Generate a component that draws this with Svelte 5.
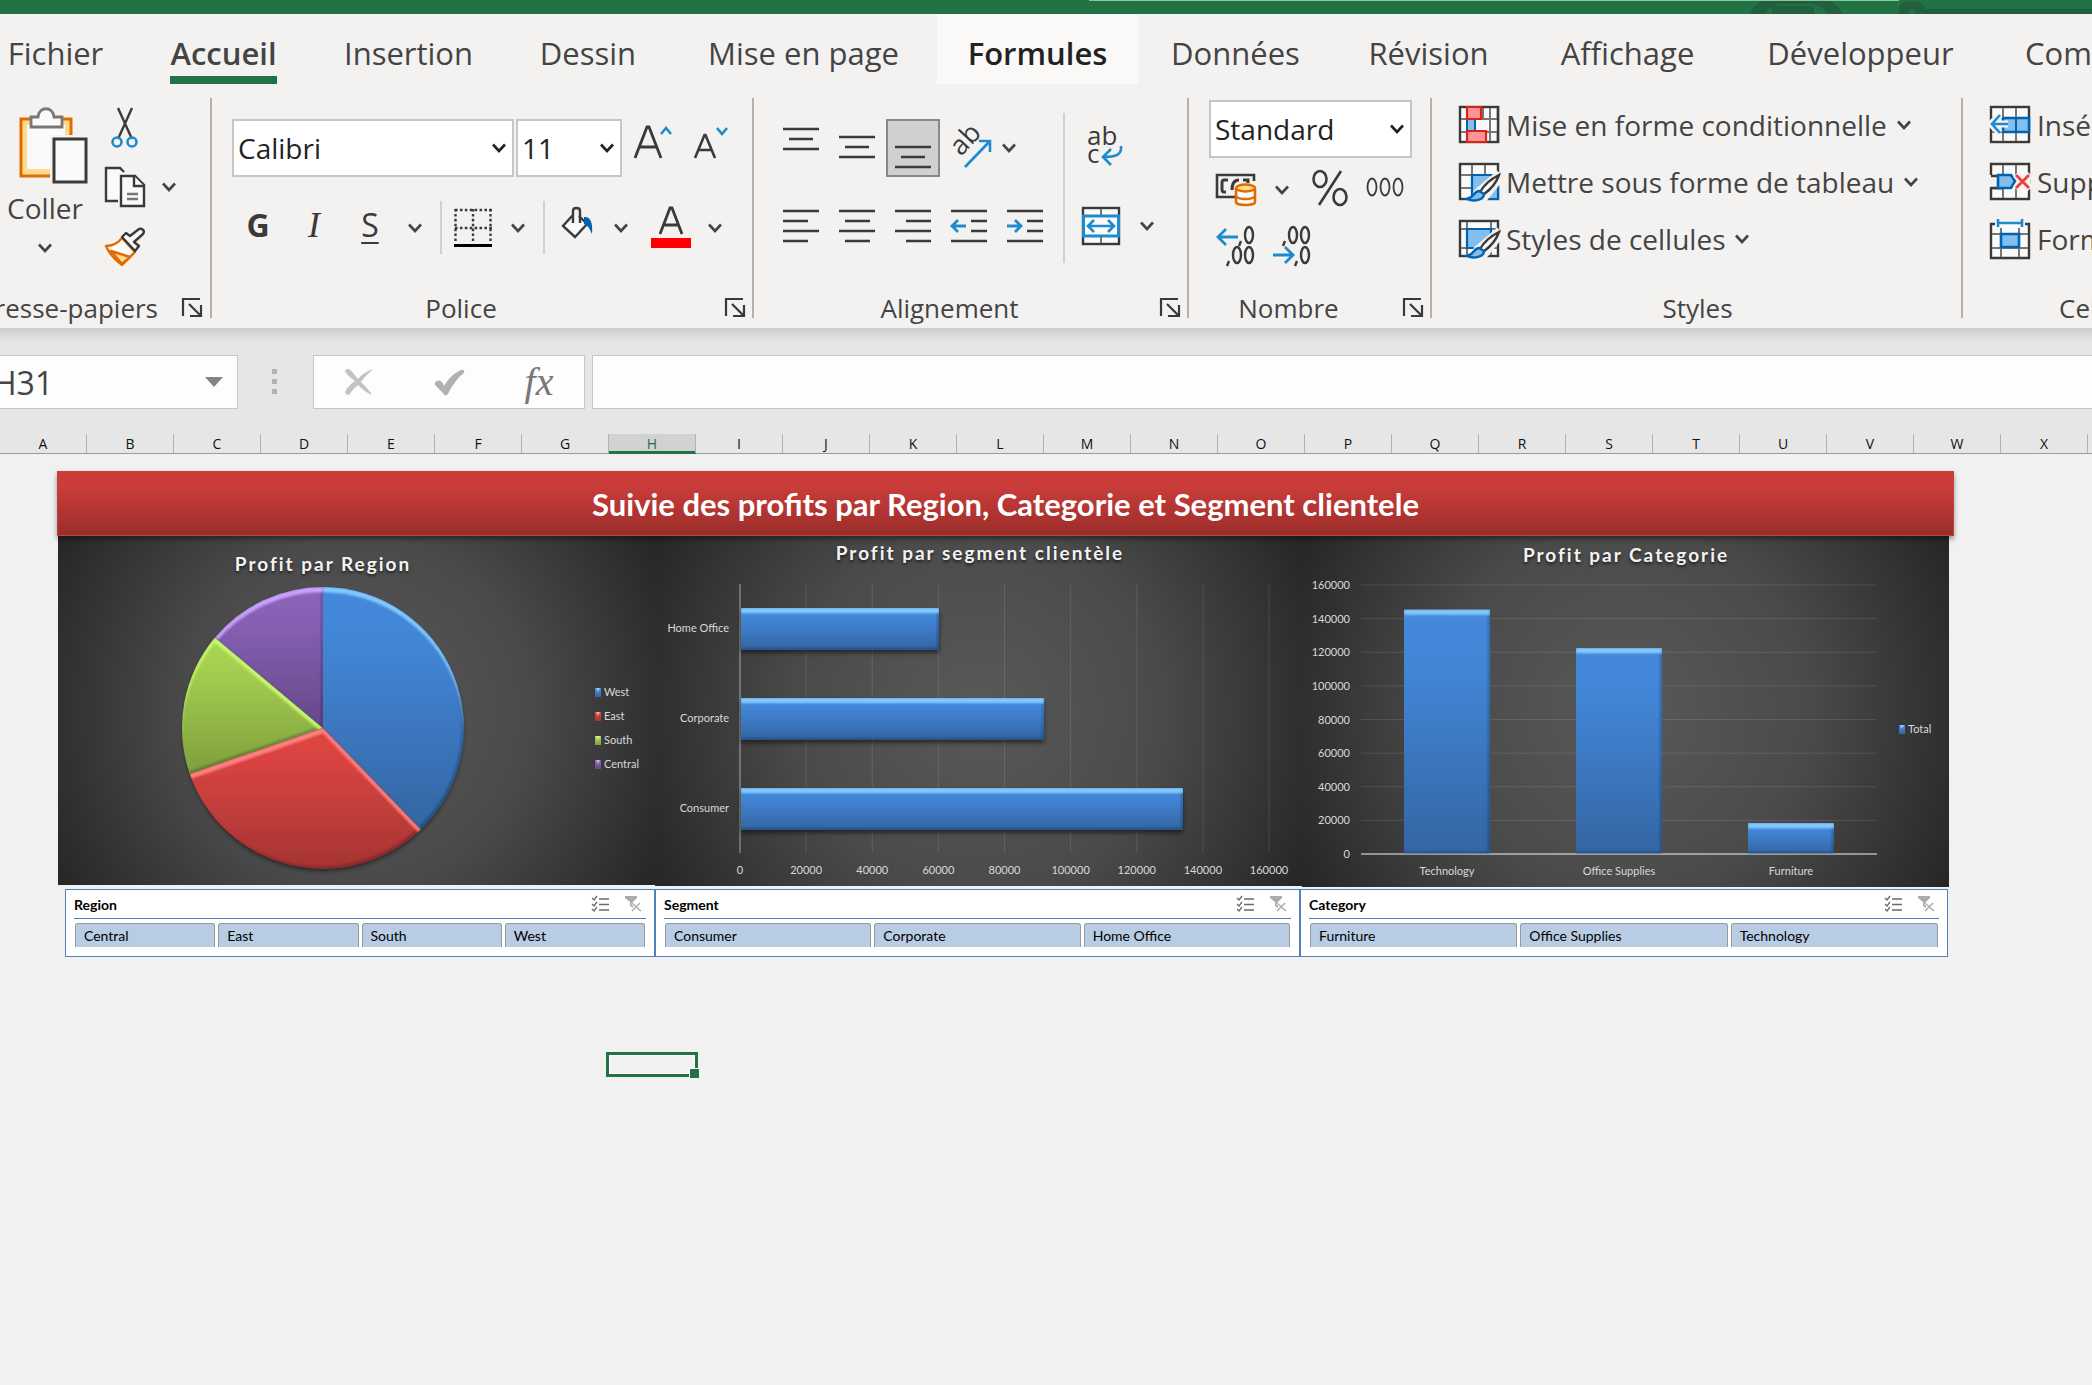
<script>
  const tabs = ['Fichier', 'Accueil', 'Insertion', 'Dessin', 'Mise en page', 'Formules', 'Données', 'Révision', 'Affichage', 'Développeur', 'Compléments'];
  const columns = 'ABCDEFGHIJKLMNOPQRSTUVWXY'.split('');

  const verticalAligns = [
    { name: 'Aligner en haut', top: 9 },
    { name: 'Aligner au centre', top: 17 },
    { name: 'Aligner en bas', top: 27, on: true }
  ];
  const horizontalAligns = [
    { name: 'Aligner à gauche', x: 2 },
    { name: 'Centrer', x: 8 },
    { name: 'Aligner à droite', x: 13 }
  ];

  const ink = '#3b3a39';

  const cx = 265;
  const cy = 192;
  const r = 141;
  const slices = [
    { name: 'South', from: 251, to: 310, fill: 'green' },
    { name: 'Central', from: 310, to: 360, fill: 'purple' },
    { name: 'West', from: 0, to: 136, fill: 'blue' },
    { name: 'East', from: 136, to: 251, fill: 'red' }
  ];
  const regions = [
    { name: 'West', fill: 'blue' },
    { name: 'East', fill: 'red' },
    { name: 'South', fill: 'green' },
    { name: 'Central', fill: 'purple' }
  ];
  const hues = [
    { id: 'blue', light: '#86ccff', top: '#4489dc', mid: '#4285d6', end: '#3465a2' },
    { id: 'red', light: '#ff8482', top: '#df4543', mid: '#d84340', end: '#a43432' },
    { id: 'green', light: '#c8fa70', top: '#acd853', mid: '#a4cd50', end: '#7e9f3d' },
    { id: 'purple', light: '#cfa4ff', top: '#8d66bc', mid: '#8660b4', end: '#664888' }
  ];
  const point = (deg) => {
    const a = (deg * Math.PI) / 180;
    return `${(cx + r * Math.sin(a)).toFixed(1)} ${(cy - r * Math.cos(a)).toFixed(1)}`;
  };
  const wedge = (s) => `M${cx} ${cy}L${point(s.from)}A${r} ${r} 0 ${s.to - s.from > 180 ? 1 : 0} 1 ${point(s.to)}Z`;

  const ticks = [0, 20000, 40000, 60000, 80000, 100000, 120000, 140000, 160000];
  const segments = [
    { name: 'Home Office', value: 60200 },
    { name: 'Corporate', value: 92000 },
    { name: 'Consumer', value: 134000 }
  ];
  const categories = [
    { name: 'Technology', value: 145400 },
    { name: 'Office Supplies', value: 122500 },
    { name: 'Furniture', value: 18400 }
  ];
  const sx = (v) => 85 + (v / 160000) * 529;
  const cyv = (v) => 318 - (v / 160000) * 269;

  const slicers = [
    { title: 'Region', items: ['Central', 'East', 'South', 'West'] },
    { title: 'Segment', items: ['Consumer', 'Corporate', 'Home Office'] },
    { title: 'Category', items: ['Furniture', 'Office Supplies', 'Technology'] }
  ];
</script>

{#snippet chevron()}
  <svg class="chev" width="14" height="10" viewBox="0 0 14 10" aria-hidden="true"><path d="M1 1.5L7 8L13 1.5" fill="none" stroke="currentColor" stroke-width="2.6" /></svg>
{/snippet}

{#snippet more(label)}
  <button aria-label={label}>{@render chevron()}</button>
{/snippet}

{#snippet launcher(label)}
  <button class="launcher" aria-label={label}>
    <svg width="21" height="20" viewBox="0 0 21 20" fill="none" stroke={ink} stroke-width="2.2"><path d="M1 18V1H18M7 6L18 17M19 7V18H8" /></svg>
  </button>
{/snippet}

{#snippet brush()}
  <path d="M38 12L42 17L26 37L14 39L17 30Z" fill="#fafafa" stroke="#f3f2f1" stroke-width="5" />
  <path d="M40 13C32 17 25 23 21 30L24 33C31 28 37 22 40 13Z" fill="#fafafa" stroke={ink} stroke-width="2.4" />
  <path d="M20 29C15 29 15 36 8 37C15 40 25 38 25 32Z" fill="#83beec" stroke="#0063b1" stroke-width="2.4" />
{/snippet}

{#snippet bevelDefs()}
  <defs>
    {#each hues as h}
      <filter id="bevel-{h.id}" x="-10%" y="-10%" width="120%" height="125%">
        <feOffset in="SourceAlpha" dy="5" result="down" />
        <feComposite in="SourceAlpha" in2="down" operator="out" />
        <feGaussianBlur stdDeviation="1.3" result="topSoft" />
        <feFlood flood-color={h.light} flood-opacity="0.95" />
        <feComposite in2="topSoft" operator="in" />
        <feComposite in2="SourceAlpha" operator="in" result="light" />
        <feOffset in="SourceAlpha" dx="-2" dy="-2" result="up" />
        <feComposite in="SourceAlpha" in2="up" operator="out" />
        <feGaussianBlur stdDeviation="1.2" result="lowSoft" />
        <feFlood flood-color="#10142c" flood-opacity="0.55" />
        <feComposite in2="lowSoft" operator="in" />
        <feComposite in2="SourceAlpha" operator="in" result="dark" />
        <feMerge>
          <feMergeNode in="SourceGraphic" />
          <feMergeNode in="dark" />
          <feMergeNode in="light" />
        </feMerge>
      </filter>
      <linearGradient id={h.id} x2="0" y2="1"><stop stop-color={h.top} /><stop offset="0.25" stop-color={h.mid} /><stop offset="1" stop-color={h.end} /></linearGradient>
    {/each}
  </defs>
{/snippet}

{#snippet swatch(x, y, fill)}
  <rect {x} y={y - 4} width="6" height="9" fill="url(#{fill})" />
  <path d="M{x + 1} {y - 4}h4l-2 4z" fill="#fff" fill-opacity="0.5" />
{/snippet}

<div class="app">
  <header class="titlebar">
    <svg width="1003" height="14" viewBox="0 0 1003 14" aria-hidden="true">
      <path d="M661 14C665 6 670 2 675 0H739C746 3 750 8 754 14H739C735 9 730 5 724 4H690C684 6 679 9 676 14Z" fill="#225f3d" />
      <path d="M683 6H725V14H683ZM810 14V8C810 0 835 -2 836 9H1003V14H827C827 6 820 8 820 14Z" fill="#225f3d" />
      <path d="M0 0H810V1H0Z" fill="#8fc3a5" />
    </svg>
  </header>

  <nav class="tabs" aria-label="Onglets du ruban">
    {#each tabs as tab}
      <button class="tab" class:active={tab === 'Accueil'} class:hover={tab === 'Formules'}><span>{tab}</span></button>
    {/each}
  </nav>

  <div class="ribbon">
    <section class="group">
      <div class="body clipboard">
        <button class="paste">
          <svg width="70" height="78" viewBox="0 0 70 78" aria-hidden="true">
            <rect x="4" y="13" width="50" height="57" fill="#fbdb8f" stroke="#e06c00" stroke-width="3" />
            <path d="M10 19H48V63H10Z" fill="#fafafa" />
            <path d="M14 21V11H21C22 0 36 0 37 11H45V21Z" fill="#fafafa" stroke="#797775" stroke-width="2.8" />
            <path d="M33 29H58V73H33Z" fill="#f3f2f1" />
            <rect x="37" y="33" width="32" height="43" fill="#fafafa" stroke={ink} stroke-width="3" />
          </svg>
          <span>Coller</span>
          {@render chevron()}
        </button>
        <div class="clip-tools">
          <button aria-label="Couper">
            <svg width="42" height="42" viewBox="0 0 42 42" fill="none">
              <path d="M14 2L28 33M28 2L14 33" stroke={ink} stroke-width="2.4" />
              <circle cx="13" cy="36" r="4.5" stroke="#1e8bcd" stroke-width="2.6" /><circle cx="28" cy="36" r="4.5" stroke="#1e8bcd" stroke-width="2.6" />
            </svg>
          </button>
          <div class="copy">
            <button aria-label="Copier">
              <svg width="42" height="42" viewBox="0 0 42 42" fill="#fafafa" stroke={ink} stroke-width="2.4">
                <path d="M14 35H2V2H16L20 6" /><path d="M17 10H31L40 19V40H17Z" /><path d="M30 10V20H40" /><path d="M23 28H34M23 33H34" stroke="#797775" />
              </svg>
            </button>
            {@render more('Options de copie')}
          </div>
          <button aria-label="Reproduire la mise en forme">
            <svg width="42" height="42" viewBox="0 0 42 42" stroke-width="2.4" stroke-linejoin="round">
              <path d="M18 12C14 17 8 20 2 20C5 27 11 34 18 39L31 26Z" fill="#fafafa" stroke="#e06c00" />
              <path d="M7 25L26 31L18 38Z" fill="#fbdb8f" stroke="#e06c00" />
              <path d="M18 11L22 7L26 10L35 3C39 2 41 5 39 8L30 16L35 20L31 25Z" fill="#fafafa" stroke={ink} />
            </svg>
          </button>
        </div>
      </div>
      <footer class="end"><span>Presse-papiers</span>{@render launcher('Presse-papiers')}</footer>
    </section>

    <section class="group">
      <div class="body font">
        <div class="font-row">
          <span class="pick"><select aria-label="Police"><option>Calibri</option></select>{@render chevron()}</span>
          <span class="pick"><select aria-label="Taille de police"><option>11</option></select>{@render chevron()}</span>
          <button class="grow" aria-label="Augmenter la taille de police">
            <svg width="40" height="44" viewBox="0 0 40 44" fill="none"><path d="M2 39L14 8H16L28 39M6 28H24" stroke={ink} stroke-width="2.8" /><path d="M28 15L33 9L38 15" stroke="#1e8bcd" stroke-width="2.6" /></svg>
          </button>
          <button class="shrink" aria-label="Réduire la taille de police">
            <svg width="40" height="44" viewBox="0 0 40 44" fill="none"><path d="M2 39L11.500 16H12.500L22 39M6 31H18" stroke={ink} stroke-width="2.6" /><path d="M24 9L29 15L34 9" stroke="#1e8bcd" stroke-width="2.6" /></svg>
          </button>
        </div>
        <div class="style-row">
          <button class="glyph bold">G</button>
          <button class="glyph italic">I</button>
          <button class="glyph under">S</button>
          {@render more('Options de soulignement')}
          <i class="rule"></i>
          <button aria-label="Bordures">
            <svg width="38" height="40" viewBox="0 0 38 40" fill="none"><path d="M1 2H38M1 20H38" stroke={ink} stroke-width="2.4" stroke-dasharray="2.600 2.300" /><path d="M1.500 1V35M19 1V35M36.500 1V35" stroke={ink} stroke-width="2.4" stroke-dasharray="2.600 2.300" /><path d="M0 37.500H38" stroke="#000" stroke-width="3" /></svg>
          </button>
          {@render more('Options de bordure')}
          <i class="rule"></i>
          <button aria-label="Couleur de remplissage">
            <svg width="34" height="44" viewBox="0 0 34 44"><path d="M12 9L2 20L14 31L26 18L18 10" fill="#fafafa" stroke={ink} stroke-width="2.4" /><path d="M12 17V5C12 1 19 1 19 5V17" fill="none" stroke={ink} stroke-width="2.4" /><path d="M23 11C30 10 32 18 31 28C29 24 28 20 23 18Z" fill="#0063b1" /></svg>
          </button>
          {@render more('Choisir le remplissage')}
          <button aria-label="Couleur de police">
            <svg width="40" height="42" viewBox="0 0 40 42"><path d="M9 27L19 1H21L31 27M13 18H27" fill="none" stroke={ink} stroke-width="2.8" /><rect y="31" width="40" height="10" fill="#f00" /></svg>
          </button>
          {@render more('Choisir la couleur')}
        </div>
      </div>
      <footer><span>Police</span>{@render launcher('Police')}</footer>
    </section>

    <section class="group">
      <div class="body align">
        <div class="align-main">
          <div class="align-row">
            {#each verticalAligns as a}
              <button class:on={a.on} aria-label={a.name}>
                <svg width="40" height="56" viewBox="0 0 40 56" stroke={ink} stroke-width="2.6"><path d="M2 {a.top}H38M8 {a.top + 10}H32M2 {a.top + 20}H38" /></svg>
              </button>
            {/each}
            <button aria-label="Orientation">
              <svg width="44" height="50" viewBox="0 0 44 50"><text x="14" y="34" transform="rotate(-47 14 34)" font-size="27" fill={ink}>ab</text><path d="M18 44L43 18M32 18H43V29" fill="none" stroke="#1e8bcd" stroke-width="2.6" /></svg>
            </button>
            {@render more('Options d’orientation')}
          </div>
          <div class="align-row">
            {#each horizontalAligns as a}
              <button aria-label={a.name}>
                <svg width="40" height="36" viewBox="0 0 40 36" stroke={ink} stroke-width="2.6"><path d="M2 3H38M{a.x} 13h25M2 23H38M{a.x} 33h25" /></svg>
              </button>
            {/each}
            <button aria-label="Diminuer le retrait">
              <svg width="40" height="36" viewBox="0 0 40 36" fill="none" stroke={ink} stroke-width="2.6"><path d="M2 3H38M22 13H38M22 23H38M2 33H38" /><path d="M17 18H3M9 12L3 18L9 24" stroke="#1e8bcd" stroke-width="2.8" /></svg>
            </button>
            <button aria-label="Augmenter le retrait">
              <svg width="40" height="36" viewBox="0 0 40 36" fill="none" stroke={ink} stroke-width="2.6"><path d="M2 3H38M22 13H38M22 23H38M2 33H38" /><path d="M2 18H16M10 12L16 18L10 24" stroke="#1e8bcd" stroke-width="2.8" /></svg>
            </button>
          </div>
        </div>
        <i class="rule tall"></i>
        <div class="wrap-tools">
          <button aria-label="Renvoyer à la ligne">
            <svg width="38" height="44" viewBox="0 0 38 44"><text font-size="26" fill={ink}><tspan x="1" y="21">ab</tspan><tspan x="1" y="39">c</tspan></text><path d="M35 22C36 31 30 33 17 33M25 25L17 33L25 41" fill="none" stroke="#1e8bcd" stroke-width="2.6" /></svg>
          </button>
          <div class="merge">
            <button aria-label="Fusionner et centrer">
              <svg width="38" height="38" viewBox="0 0 38 38"><rect x="1" y="1" width="36" height="36" fill="#fafafa" stroke={ink} stroke-width="2.4" /><path d="M19 2V36" stroke="#797775" stroke-width="2" /><rect x="1.500" y="9" width="35" height="20" fill="#fafafa" stroke="#1e8bcd" stroke-width="3" /><path d="M6 19H32M12 13L6 19L12 25M26 13L32 19L26 25" fill="none" stroke="#1e8bcd" stroke-width="2.6" /></svg>
            </button>
            {@render more('Options de fusion')}
          </div>
        </div>
      </div>
      <footer><span>Alignement</span>{@render launcher('Alignement')}</footer>
    </section>

    <section class="group">
      <div class="body number">
        <span class="pick"><select aria-label="Format de nombre"><option>Standard</option></select>{@render chevron()}</span>
        <div class="number-row">
          <button aria-label="Format comptable">
            <svg width="42" height="36" viewBox="0 0 42 36" fill="none"><path d="M39 9V3H2V25H20" stroke={ink} stroke-width="2.6" /><path d="M13 8H9Q7 8 7 11V17Q7 20 9 20H11M24 8Q17 8 17 18M28 8H33V11" stroke={ink} stroke-width="3" /><path d="M21 16V30C21 34 40 34 40 30V16" fill="#fafafa" stroke="#e06c00" stroke-width="2.6" /><ellipse cx="30.500" cy="16" rx="9.500" ry="3.500" fill="#fbdb8f" stroke="#e06c00" stroke-width="2.4" /><path d="M21 24C23 28 38 28 40 24" fill="none" stroke="#e06c00" stroke-width="2.4" /></svg>
          </button>
          {@render more('Choisir la devise')}
          <button aria-label="Style de pourcentage">
            <svg width="38" height="40" viewBox="0 0 38 40" fill="none" stroke={ink} stroke-width="2.6"><path d="M30 1L8 35" /><ellipse cx="9" cy="9" rx="6.500" ry="8" /><ellipse cx="29" cy="27" rx="6.500" ry="8" /></svg>
          </button>
          <button aria-label="Séparateur de milliers">
            <svg width="40" height="28" viewBox="0 0 40 28" fill="none" stroke={ink} stroke-width="1.800"><ellipse cx="7" cy="11" rx="4.500" ry="8.500" /><ellipse cx="20" cy="11" rx="4.500" ry="8.500" /><ellipse cx="33" cy="11" rx="4.500" ry="8.500" /></svg>
          </button>
        </div>
        <div class="decimal-row">
          <button aria-label="Ajouter une décimale">
            <svg width="40" height="42" viewBox="0 0 40 42" fill="none" stroke={ink} stroke-width="2.4"><ellipse cx="33" cy="10" rx="4" ry="8" /><ellipse cx="21" cy="30" rx="4" ry="8" /><ellipse cx="33" cy="30" rx="4" ry="8" /><path d="M25 16L23 21M13 36L11 41" /><path d="M22 12H2M10 4L2 12L10 20" stroke="#1e8bcd" stroke-width="2.8" /></svg>
          </button>
          <button aria-label="Réduire les décimales">
            <svg width="40" height="42" viewBox="0 0 40 42" fill="none" stroke={ink} stroke-width="2.4"><ellipse cx="21" cy="10" rx="4" ry="8" /><ellipse cx="33" cy="10" rx="4" ry="8" /><ellipse cx="33" cy="30" rx="4" ry="8" /><path d="M13 16L11 21M25 36L23 41" /><path d="M1 30H21M13 22L21 30L13 38" stroke="#1e8bcd" stroke-width="2.8" /></svg>
          </button>
        </div>
      </div>
      <footer><span>Nombre</span>{@render launcher('Nombre')}</footer>
    </section>

    <section class="group">
      <div class="body list">
        <button class="entry">
          <svg width="42" height="40" viewBox="0 0 42 40" fill="none"><rect x="1" y="2" width="38" height="35" fill="#fafafa" stroke={ink} stroke-width="2.4" /><path d="M2 14H38M2 27H38M8 3V36M24 3V36" stroke="#797775" stroke-width="2" /><path d="M8 15H38V26H8Z" fill="#fafafa" /><path d="M31 3V36" stroke="#797775" stroke-width="2" /><path d="M8 14H16V27H8Z" fill="#83beec" stroke="#0063b1" stroke-width="2" /><path d="M8 2H22V14H8ZM8 26H27V37H8Z" fill="#ff9296" stroke="#d92518" stroke-width="2.2" /><path d="M39 1V38" stroke={ink} stroke-width="2.4" /></svg>
          <span>Mise en forme conditionnelle</span>{@render chevron()}
        </button>
        <button class="entry">
          <svg width="42" height="40" viewBox="0 0 42 40" fill="none"><rect x="1" y="2" width="38" height="35" fill="#fafafa" stroke={ink} stroke-width="2.4" /><path d="M2 13H38M2 26H38M13 3V36M26 3V36" stroke="#797775" stroke-width="2" /><path d="M13 13H39V37H13Z" fill="#83beec" stroke="#0063b1" stroke-width="2.2" />{@render brush()}</svg>
          <span>Mettre sous forme de tableau</span>{@render chevron()}
        </button>
        <button class="entry">
          <svg width="42" height="40" viewBox="0 0 42 40" fill="none"><rect x="1" y="2" width="38" height="35" fill="#fafafa" stroke={ink} stroke-width="2.4" /><path d="M2 10H38M2 29H38M8 3V36M32 3V36" stroke="#797775" stroke-width="2" /><path d="M8 10H32V29H8Z" fill="#83beec" stroke="#0063b1" stroke-width="2.2" />{@render brush()}</svg>
          <span>Styles de cellules</span>{@render chevron()}
        </button>
      </div>
      <footer class="plain"><span>Styles</span></footer>
    </section>

    <section class="group">
      <div class="body list">
        <button class="entry">
          <svg width="42" height="40" viewBox="0 0 42 40" fill="none"><rect x="1" y="2" width="38" height="35" fill="#fafafa" stroke={ink} stroke-width="2.4" /><path d="M2 13H38M2 27H38M13 3V36M26 3V36" stroke="#797775" stroke-width="2" /><path d="M13 13H39V27H13Z" fill="#83beec" stroke="#0063b1" stroke-width="2.6" /><path d="M26 13V27" stroke="#0063b1" stroke-width="2" /><path d="M18 19H1M10 10L1 19L10 28" stroke="#f3f2f1" stroke-width="7" /><path d="M18 19H2M10 10L2 19L10 28" stroke="#1e8bcd" stroke-width="2.6" /></svg>
          <span>Insérer</span>{@render chevron()}
        </button>
        <button class="entry">
          <svg width="42" height="40" viewBox="0 0 42 40" fill="none"><path d="M1 13V2H39V37H1V26H12" fill="#fafafa" stroke={ink} stroke-width="2.4" /><path d="M13 3V36M26 3V36" stroke="#797775" stroke-width="2" /><path d="M0 15H40V25H0Z" fill="#f3f2f1" /><path d="M1 14H12M1 26H12" stroke={ink} stroke-width="2.4" /><path d="M8 13H21L25 19L21 26H8Z" fill="#83beec" stroke="#0063b1" stroke-width="2.6" /><path d="M26 12L40 27M40 12L26 27" stroke="#f3f2f1" stroke-width="8" /><path d="M26 13L39 26M39 13L26 26" stroke="#f03c3c" stroke-width="2.8" /></svg>
          <span>Supprimer</span>{@render chevron()}
        </button>
        <button class="entry">
          <svg width="42" height="40" viewBox="0 0 42 40" fill="none"><path d="M5 5H1V39H39V5H35" fill="#fafafa" stroke={ink} stroke-width="2.4" /><path d="M2 15H38M2 29H38M11 9V38M29 9V38" stroke="#797775" stroke-width="2" /><path d="M11 15H29V28H11Z" fill="#83beec" stroke="#0063b1" stroke-width="2.6" /><path d="M8 4H32M8 0V8M32 0V8" stroke="#1e8bcd" stroke-width="2.6" /></svg>
          <span>Format</span>{@render chevron()}
        </button>
      </div>
      <footer class="plain cells"><span>Cellules</span></footer>
    </section>
  </div>

  <div class="formula-bar">
    <div class="name-box">
      <input aria-label="Zone Nom" value="H31" />
      <svg width="18" height="10" viewBox="0 0 18 10" aria-hidden="true"><path d="M0 0H18L9 10Z" fill="#818487" /></svg>
    </div>
    <i class="dots"><b></b><b></b><b></b></i>
    <div class="fx">
      <button aria-label="Annuler"><svg width="30" height="28" viewBox="0 0 30 28"><path d="M1 3C3 -1 7 2 9 5L14 11C18 6 23 3 29 1C25 5 20 9 17 14C22 19 26 23 28 27C23 25 18 21 14 17C10 20 7 24 5 27C3 27 1 26 1 24C3 19 7 16 11 13C7 10 2 6 1 3Z" fill="#c3c3c3" /></svg></button>
      <button aria-label="Entrer"><svg width="31" height="27" viewBox="0 0 31 27"><path d="M1 14C3 10 8 11 10 17C15 9 20 4 27 1Q31 0 30 4C23 9 18 17 14 25Q11 28 9 24L2 17Q0 15 1 14Z" fill="#b1b1b1" /></svg></button>
      <button class="fn" aria-label="Insérer une fonction">fx</button>
    </div>
    <input class="formula" aria-label="Barre de formule" />
  </div>

  <div class="headers">
    {#each columns as c}
      <span class:selected={c === 'H'}>{c}</span>
    {/each}
  </div>

  <main class="sheet">
    <h1>Suivie des profits par Region, Categorie et Segment clientele</h1>
    <div class="charts">
      <svg viewBox="0 0 597 349" role="img" aria-label="Profit par Region">
        {@render bevelDefs()}
        <text class="title" x="265" y="35">Profit par Region</text>
        <circle class="cast" {cx} {cy} r={r - 1} fill="#333" />
        {#each slices as s}
          <path d={wedge(s)} fill="url(#{s.fill})" filter="url(#bevel-{s.fill})" />
        {/each}
        {#each regions as s, i}
          {@render swatch(537, 156 + i * 24, s.fill)}
          <text x="546" y={160 + i * 24}>{s.name}</text>
        {/each}
      </svg>

      <svg viewBox="0 0 647 350" role="img" aria-label="Profit par segment clientèle">
        <text class="title" x="325" y="24">Profit par segment clientèle</text>
        {#each ticks as t}
          <path class:axis={t === 0} class="grid" d="M{sx(t)} 48V317" />
          <text class="mid" x={sx(t)} y="338">{t}</text>
        {/each}
        {#each segments as s, i}
          <g class="cast"><rect x="86" y={72 + i * 90} width={sx(s.value) - 86} height="42" fill="url(#blue)" filter="url(#bevel-blue)" /></g>
          <text class="right" x="74" y={96 + i * 90}>{s.name}</text>
        {/each}
      </svg>

      <svg viewBox="0 0 647 351" role="img" aria-label="Profit par Categorie">
        <text class="title" x="324" y="26">Profit par Categorie</text>
        {#each ticks as t}
          <path class:axis={t === 0} class="grid" d="M59 {cyv(t)}H575" />
          <text class="right" x="48" y={cyv(t) + 4}>{t}</text>
        {/each}
        {#each categories as c, i}
          <rect x={102 + i * 172} y={cyv(c.value)} width="86" height={318 - cyv(c.value)} fill="url(#blue)" filter="url(#bevel-blue)" />
          <text class="mid" x={145 + i * 172} y="339">{c.name}</text>
        {/each}
        <path class="grid axis" d="M59 318H575" />
        {@render swatch(597, 193, 'blue')}
        <text x="606" y="197">Total</text>
      </svg>
    </div>

    <div class="slicers">
      {#each slicers as s}
        <section class="slicer">
          <header>
            <h2>{s.title}</h2>
            <button aria-label="Sélection multiple"><svg width="17" height="16" viewBox="0 0 17 16" fill="none" stroke="#6b6b6b" stroke-width="1.300"><path d="M7 3H17M7 8.500H17M7 14H17M0 2L2 4L5 0M0 8L2 10L5 6M0 13L2 15L5 11" /></svg></button>
            <button aria-label="Effacer le filtre"><svg width="17" height="16" viewBox="0 0 17 16"><path d="M0 0H12V2L8 6V12L5 10V6L0 2Z" fill="#ababab" /><path d="M7 7L16 15M15 7L7 15" stroke="#fff" stroke-width="3" /><path d="M7 7L16 15M15 7L7 15" stroke="#b0b0b0" stroke-width="1.600" /></svg></button>
          </header>
          <div class="items">
            {#each s.items as item}<button>{item}</button>{/each}
          </div>
        </section>
      {/each}
    </div>

    <div class="cell"><b></b></div>
  </main>
</div>

<style>
  :global(body) { margin: 0; background: #f1f1f1; }
  .app {
    overflow: hidden;
    min-height: 100vh;
    font-family: 'Open Sans', 'Noto Sans', sans-serif;
    font-size: 28px;
    color: #444;
    background: #f1f1f1;
  }
  button, input, select { font: inherit; color: inherit; border: 0; padding: 0; margin: 0; background: none; border-radius: 0; }
  button { display: flex; align-items: center; justify-content: center; white-space: nowrap; }
  svg { display: block; flex: none; }
  button svg { overflow: visible; }

  .titlebar { height: 14px; background: #217346; overflow: hidden; }
  .titlebar svg { margin-left: auto; }

  .tabs {
    display: grid;
    grid-template-columns: 161px 175px 195px 164px 267px 201px 195px 191px 207px 259px 230px;
    margin-left: -25px;
    height: 84px;
    background: #f3f2f1;
  }
  .tab { height: 70px; align-items: flex-end; font-size: 31px; }
  .tab span { line-height: 46px; border-bottom: 8px solid transparent; }
  .tab:last-child { justify-content: flex-start; padding-left: 35px; }
  .active { font-weight: 600; }
  .active span { border-color: #217346; }
  .hover { background: #faf9f8; font-weight: 600; color: #222; }

  .ribbon {
    display: grid;
    grid-template-columns: 212px 542px 435px 243px 531px 1fr;
    background: #f3f2f1;
    height: 230px;
  }
  .group { display: grid; grid-template-rows: 190px 40px; min-width: 0; position: relative; }
  .group:not(:last-child)::after { content: ''; position: absolute; right: 0; top: 0; width: 2px; height: 220px; background: #b3b0ad; }
  footer { display: grid; grid-template-columns: 1fr 29px; column-gap: 15px; align-items: center; font-size: 26px; line-height: 40px; text-align: center; white-space: nowrap; min-width: 0; }
  .launcher { justify-content: flex-start; }
  footer.end { display: flex; justify-content: flex-end; gap: 24px; padding-right: 9px; }
  footer.plain { grid-template-columns: 1fr; }
  footer.cells span { text-align: left; padding-left: 96px; }
  .chev { color: #444; }
  .rule { width: 2px; height: 53px; background: #d2d0ce; justify-self: center; }

  .clipboard { display: flex; padding: 8px 0 0; }
  .paste { flex-direction: column; justify-content: flex-start; width: 90px; }
  .paste svg:first-child { margin-left: 14px; }
  .paste span { line-height: 40px; margin: 4px 0 15px; }
  .clip-tools { display: grid; grid-template-rows: 60px 60px 60px; padding-left: 14px; align-items: start; }
  .clip-tools > button { width: 42px; }
  .copy { display: flex; gap: 16px; }

  .font { padding: 21px 0 0 20px; }
  .font-row { display: flex; height: 58px; }
  .font-row .pick:first-child { width: 282px; margin-right: 2px; }
  .font-row .pick:nth-child(2) { width: 106px; margin-right: 11px; }
  .grow { margin-right: 20px; align-items: flex-start; }
  .shrink { align-items: flex-start; }
  .pick { display: grid; grid-template-columns: 1fr 22px; align-items: center; height: 58px; }
  .pick select {
    grid-column: 1 / 3; grid-row: 1; box-sizing: border-box; width: 100%; height: 58px;
    appearance: none; border: 2px solid #c8c6c4; background: #fff; color: #222; padding-left: 4px;
  }
  .pick .chev { grid-column: 2; grid-row: 1; pointer-events: none; color: #222; }
  .style-row {
    display: grid; align-items: center; height: 53px; margin-top: 24px; margin-left: -2px;
    grid-template-columns: 56px 56px 56px 34px 18px 46px 44px 8px 60px 26px 74px 14px;
  }
  .glyph { font-size: 32px; color: #3b3a39; line-height: 44px; padding-bottom: 6px; }
  .bold { font-weight: 700; }
  .italic { font-style: italic; font-family: 'Liberation Serif', serif; font-size: 36px; }
  .under { text-decoration: underline; text-underline-offset: 5px; text-decoration-thickness: 2px; }

  .align { display: flex; }
  .align-main { padding: 21px 0 0 19px; width: 290px; }
  .align-row { display: grid; grid-template-columns: repeat(5, 56px); height: 58px; align-items: center; }
  .align-row:first-child { grid-template-columns: repeat(4, 56px) 24px; }
  .align-row + .align-row { margin-top: 20px; }
  .on { box-sizing: border-box; height: 58px; margin: 0 1px; border: 2px solid #8a8886; background: #d2d0ce; }
  .tall { height: 150px; margin-top: 15px; }
  .wrap-tools { padding: 26px 0 0 17px; }
  .wrap-tools > button { padding-left: 4px; }
  .merge { display: flex; gap: 20px; margin-top: 39px; }

  .number { padding: 2px 20px 0 20px; }
  .number-row { display: grid; grid-template-columns: 40px 36px 44px 50px; column-gap: 8px; align-items: center; height: 40px; margin: 12px 0 0 7px; }
  .decimal-row { display: flex; gap: 16px; margin: 15px 0 0 7px; }

  .list { display: grid; grid-template-rows: repeat(3, 57px); padding-left: 27px; }
  .entry { justify-content: flex-start; gap: 5px; height: 54px; line-height: 54px; }
  .entry .chev { margin-left: 5px; }

  .formula-bar {
    display: flex; align-items: flex-start; height: 54px; padding: 27px 0 25px;
    background: linear-gradient(#cdcdcd, #e6e6e6 14px);
  }
  .name-box, .fx, .formula { box-sizing: border-box; height: 54px; background: #fdfdfd; border: 1px solid #c6c6c6; }
  .name-box { display: flex; align-items: center; width: 246px; margin-left: -8px; padding-right: 14px; }
  .name-box input { flex: 1; min-width: 0; font-size: 32px; }
  .dots { display: grid; gap: 5px; margin: 14px 36px 0 34px; }
  .dots b { width: 5px; height: 5px; background: #b1b1b1; }
  .fx { display: grid; grid-template-columns: repeat(3, 90px); width: 272px; margin-right: 7px; }
  .fn { font-family: 'Liberation Serif', serif; font-style: italic; font-size: 40px; line-height: 50px; color: #777; }
  .formula { flex: 1; min-width: 0; padding: 0 8px; border-right: 0; }

  .headers {
    display: grid; grid-template-columns: repeat(25, 87px); height: 19px;
    font-size: 14px; line-height: 20px; text-align: center; color: #111;
    background: #e6e6e6; border-bottom: 1px solid #9b9b9b;
  }
  .headers span { border-right: 1px solid #b1b1b1; height: 19px; }
  .headers .selected { background: #d2d2d2; color: #217346; box-shadow: inset 0 -2px #217346, 0 1px #217346; }

  .sheet { padding: 17px 138px 0 57px; font-family: Lato, Carlito, sans-serif; }
  h1 {
    position: relative; box-sizing: border-box; height: 65px; margin: 0; border: 1px solid #bf4341;
    background: linear-gradient(#ce3b37, #cb3d3a 20%, #9b2d2a);
    box-shadow: 0 3px 5px rgba(0, 0, 0, 0.4);
    color: #fff; font-size: 31px; line-height: 64px; text-align: center; white-space: nowrap;
  }
  .charts { display: grid; grid-template-columns: 597fr 647fr 647fr; align-items: start; margin: 0 5px 0 1px; }
  .charts svg { width: 100%; background: radial-gradient(circle, #595959, #4a4a4a 50%, #262626); }
  .charts text { font-size: 11px; fill: #d9d9d9; }
  .charts .title { font-size: 19px; font-weight: 700; letter-spacing: 2px; fill: #f2f2f2; text-anchor: middle; text-shadow: 0 2px 3px rgba(0, 0, 0, 0.6); }
  .charts .mid { text-anchor: middle; }
  .charts .right { text-anchor: end; }
  .cast { filter: drop-shadow(0 3px 2px rgba(0, 0, 0, 0.5)); }
  .grid { stroke: #f2f2f2; stroke-opacity: 0.12; stroke-width: 1; }
  .axis { stroke-opacity: 0.6; }

  .slicers { display: grid; grid-template-columns: 590fr 645fr 648fr; margin: 2px 6px 0 8px; }
  .slicer { box-sizing: border-box; height: 68px; padding: 0 8px; border: 1px solid #4f81bd; background: #fff; }
  .slicer header { display: flex; align-items: center; height: 28px; gap: 16px; padding-right: 4px; border-bottom: 1px solid #4f81bd; }
  h2 { flex: 1; margin: 0; font-size: 14px; color: #000; }
  .items { display: flex; gap: 3px; margin: 4px 1px 0; }
  .items button {
    flex: 1; height: 24px; justify-content: flex-start; padding-left: 8px; font-size: 14px; color: #000;
    background: #b8cce4; border: 1px solid #999; border-bottom: 0; border-radius: 3px 3px 0 0; box-sizing: border-box;
  }

  .cell { position: relative; box-sizing: border-box; width: 92px; height: 25px; margin: 95px 0 0 549px; border: 3px solid #217346; box-shadow: inset 0 0 0 1px #fff; }
  .cell b { position: absolute; right: -4px; bottom: -4px; width: 9px; height: 9px; background: #217346; box-shadow: -1px -1px 0 #fff; }
</style>
